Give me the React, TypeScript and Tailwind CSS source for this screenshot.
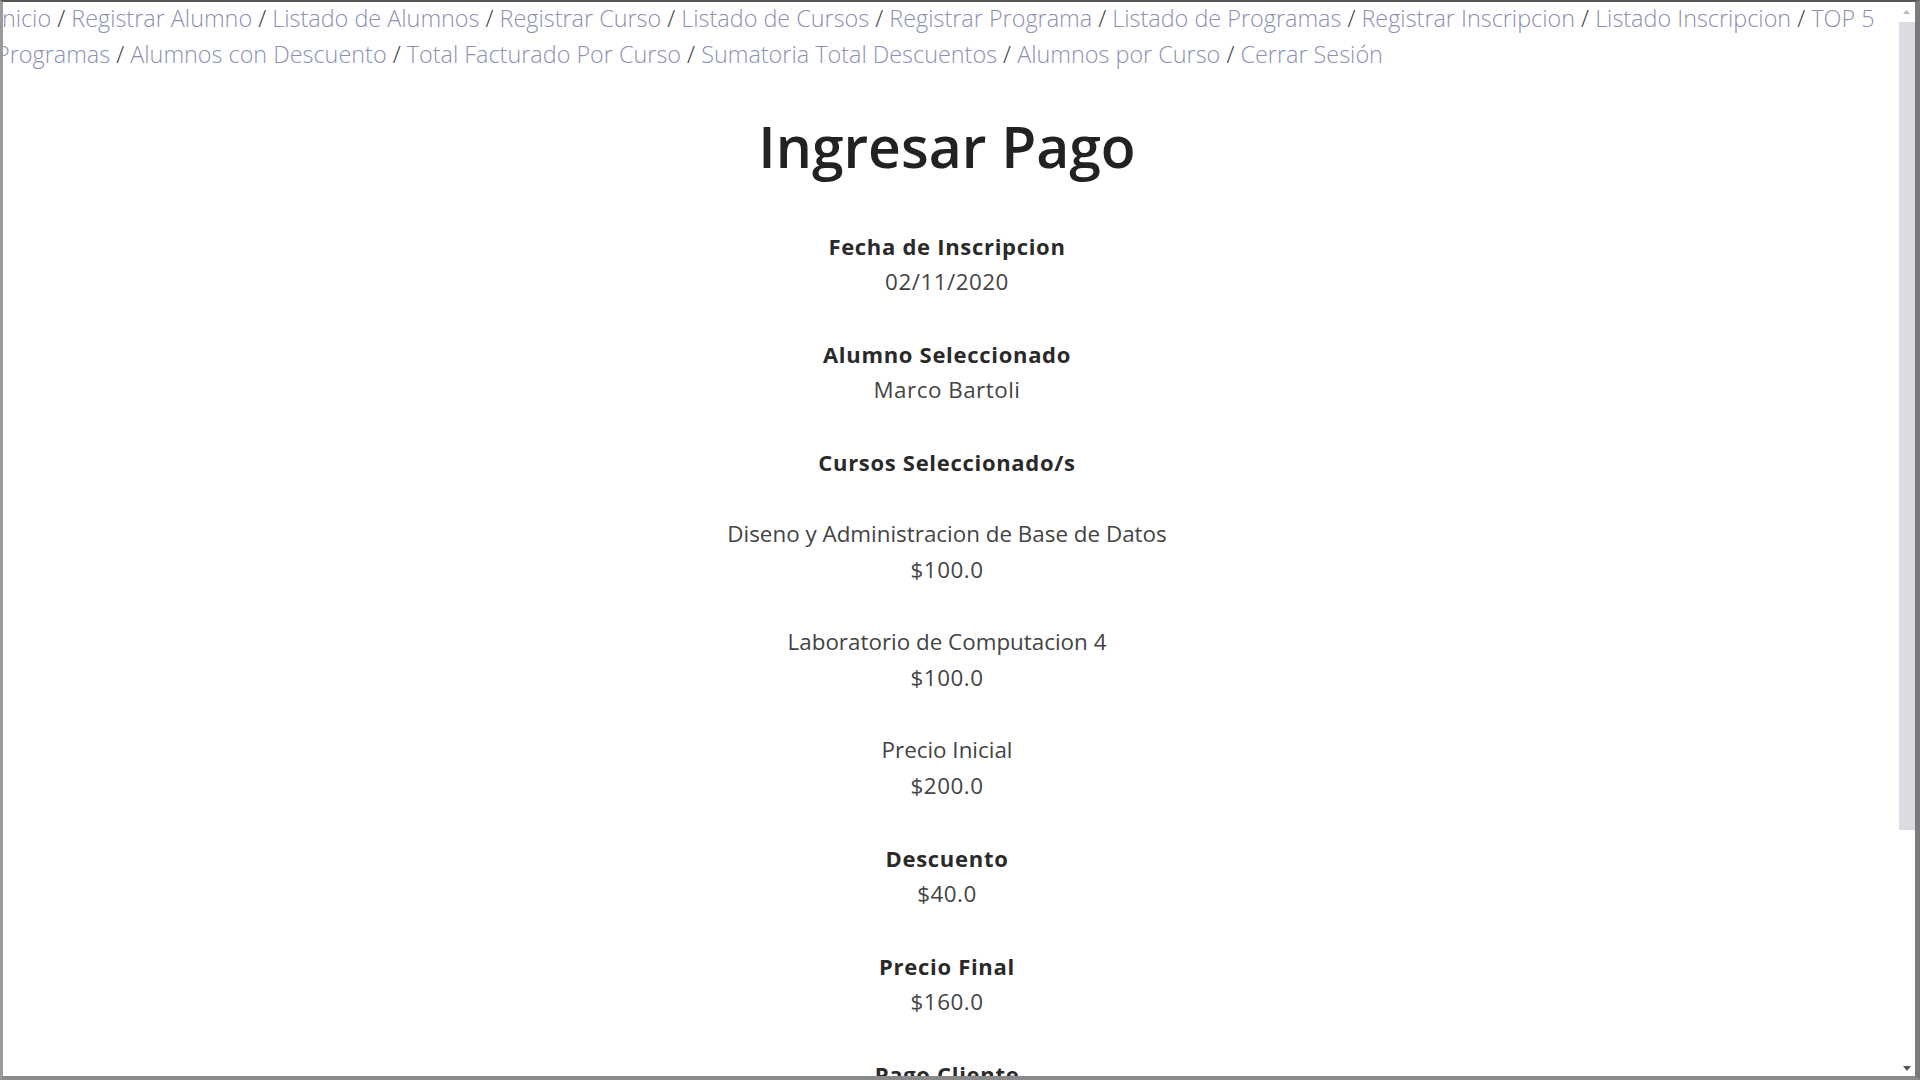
import React from "react";

const links = [
  "Registrar Alumno",
  "Listado de Alumnos",
  "Registrar Curso",
  "Listado de Cursos",
  "Registrar Programa",
  "Listado de Programas",
  "Registrar Inscripcion",
  "Listado Inscripcion",
];
const links2 = [
  "Alumnos con Descuento",
  "Total Facturado Por Curso",
  "Sumatoria Total Descuentos",
  "Alumnos por Curso",
  "Cerrar Sesión",
];

function Sep() {
  return <span className="text-[#3a3a3a]"> / </span>;
}

function Link({ children }: { children: React.ReactNode }) {
  return <a className="text-[#8c90b4] cursor-pointer">{children}</a>;
}

function Group({ label, value, bold = true }: { label: string; value: string; bold?: boolean }) {
  return (
    <div className="mb-[36px]">
      <div
        className={
          bold ? "font-bold text-[22px] tracking-[0.7px] text-[#2a2a2a]" : "text-[#444]"
        }
      >
        {label}
      </div>
      <div className="text-[#444] tracking-[0.5px]">{value}</div>
    </div>
  );
}

export default function App() {
  return (
    <div
      className="w-screen h-screen overflow-hidden bg-white flex border-t-2 border-t-[#555] border-l-[3px] border-l-[#9a9a9a] border-b-[4px] border-b-[#8a8a8a] border-r-[5px] border-r-[#7a7a7a]"
      style={{ fontFamily: "'Open Sans', Lato, sans-serif" }}
    >
      <div className="flex-1 min-w-0 overflow-hidden">
        <div className="-ml-[7px] -mt-[2px] leading-[36px]">
          <nav className="text-[23.4px] font-light whitespace-nowrap">
            <Link>Inicio</Link>
            {links.map((l) => (
              <React.Fragment key={l}>
                <Sep />
                <Link>{l}</Link>
              </React.Fragment>
            ))}
            <Sep />
            <Link>TOP 5</Link>
            <br />
            <Link>Programas</Link>
            {links2.map((l) => (
              <React.Fragment key={l}>
                <Sep />
                <Link>{l}</Link>
              </React.Fragment>
            ))}
          </nav>
          <div className="text-center text-[22.4px] leading-[36px] font-normal">
            <h1 className="mt-[38px] mb-[46px] h-[72px] leading-[72px] text-[57px] font-semibold text-[#222]">
              Ingresar Pago
            </h1>
            <Group label="Fecha de Inscripcion" value="02/11/2020" />
            <Group label="Alumno Seleccionado" value="Marco Bartoli" />
            <div className="mb-[36px] font-bold text-[22px] tracking-[0.7px] text-[#2a2a2a]">
              Cursos Seleccionado/s
            </div>
            <Group label="Diseno y Administracion de Base de Datos" value="$100.0" bold={false} />
            <Group label="Laboratorio de Computacion 4" value="$100.0" bold={false} />
            <Group label="Precio Inicial" value="$200.0" bold={false} />
            <Group label="Descuento" value="$40.0" />
            <Group label="Precio Final" value="$160.0" />
            <Group label="Pago Cliente" value="" />
          </div>
        </div>
      </div>
      <div className="w-[17px] shrink-0 flex flex-col items-stretch bg-white">
        <div className="h-[20px] flex items-center justify-center">
          <svg width="7" height="4" viewBox="0 0 7 4">
            <path d="M0 4 L3.5 0 L7 4 Z" fill="#bbb" />
          </svg>
        </div>
        <div className="h-[808px] bg-[#dddbe1] ml-[1px]" />
        <div className="flex-1" />
        <div className="h-[16px] flex items-center justify-center">
          <svg width="8" height="5" viewBox="0 0 8 5">
            <path d="M0 0 L8 0 L4 5 Z" fill="#555" />
          </svg>
        </div>
      </div>
    </div>
  );
}
